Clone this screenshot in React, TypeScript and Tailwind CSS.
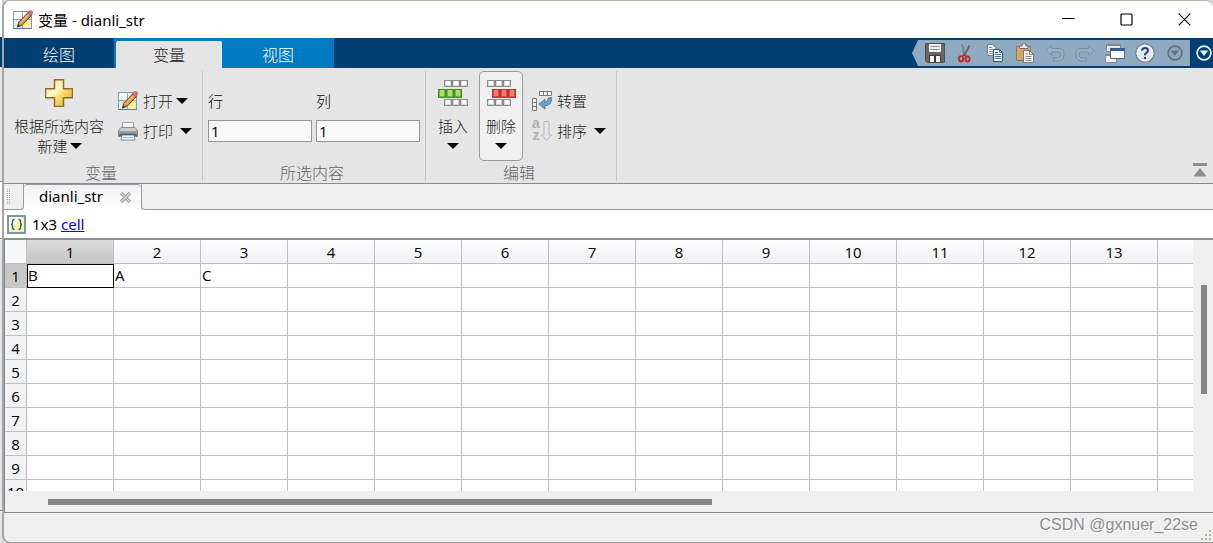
import React from 'react';

const columns = ['1', '2', '3', '4', '5', '6', '7', '8', '9', '10', '11', '12', '13', ''];
const rows = [1, 2, 3, 4, 5, 6, 7, 8, 9, 10];
const values = ['B', 'A', 'C'];

function Caret() {
  return (
    <svg width="12" height="6" viewBox="0 0 12 6" className="shrink-0">
      <path d="M0 0h12L6 6z" fill="#000" />
    </svg>
  );
}

function EditIcon() {
  return (
    <svg width="20" height="20" viewBox="0 0 20 20" className="shrink-0">
      <rect x="0.5" y="1.5" width="18" height="17" fill="#fff" stroke="#7d9cb5" />
      <rect x="10" y="10" width="8" height="8" fill="#f7ee9c" />
      <rect x="10" y="10" width="4" height="3" fill="#fbf7cf" />
      <rect x="1" y="10" width="8" height="8" fill="#dfe9f0" />
      <path d="M9.500 2v16M1 9.500h17" stroke="#8fb0c8" />
      <path d="M0 18.500h19" stroke="#587b97" />
      <path d="M4.500 17l1.200-4.800L14.800 2.800l3.400 2.900-9.200 9.600z" fill="#d2924a" stroke="#6f4420" strokeWidth="1" />
      <path d="M7.400 13.400L15.800 4.400" stroke="#f0c283" strokeWidth="1.300" />
      <path d="M14.600 3l2-2.200q1-.8 2.300.3t.4 2.400L17.900 5.700z" fill="#d4757b" stroke="#a04a55" strokeWidth="0.700" />
      <path d="M4.500 17l.6-2.400 1.900 1.500z" fill="#2b2118" />
    </svg>
  );
}

function PlusIcon() {
  return (
    <svg width="28" height="28" viewBox="0 0 28 28">
      <defs>
        <linearGradient id="gold" x1="0" y1="0" x2="1" y2="1">
          <stop offset="0.1" stopColor="#f8dc80" />
          <stop offset="0.4" stopColor="#fffad0" />
          <stop offset="0.6" stopColor="#f6d860" />
          <stop offset="1" stopColor="#e2a418" />
        </linearGradient>
      </defs>
      <path d="M9.500 .8h9v9h9v9h-9v8.600h-9v-8.600h-9v-9h9z" fill="url(#gold)" stroke="#8e6d28" strokeWidth="1.500" />
    </svg>
  );
}

function PrintIcon() {
  return (
    <svg width="20" height="20" viewBox="0 0 20 20" className="shrink-0">
      <defs>
        <linearGradient id="printer" x1="0" y1="0" x2="0" y2="1">
          <stop offset="0" stopColor="#d4d7d9" />
          <stop offset="0.5" stopColor="#9a9ea1" />
          <stop offset="1" stopColor="#5c6064" />
        </linearGradient>
      </defs>
      <path d="M4.500 8V1.500h11V8" fill="#f5f9fc" stroke="#8fa5b7" />
      <path d="M3 6.500h14l2.500 3v6H.5v-6z" fill="url(#printer)" stroke="#73787c" strokeWidth="0.800" />
      <path d="M2 9h16" stroke="#e3e6e8" />
      <path d="M3 13.500h14" stroke="#3d4043" />
      <path d="M4 14h12l1 5H3z" fill="#e7f1f9" stroke="#6b8aa4" strokeWidth="0.900" />
      <path d="M5 16.500h10" stroke="#a9c2d6" />
    </svg>
  );
}

function Cells({ x, y, fill, stroke, shade, h = 6 }: { x: number; y: number; fill: string; stroke: string; shade: string; h?: number }) {
  return (
    <g>
      {[0, 8, 16].map((dx) => (
        <g key={dx}>
          <rect x={x + dx} y={y} width="8" height={h + 1} fill={stroke} />
          <rect x={x + dx + 1} y={y + 1} width="6" height={h - 1} fill={shade} />
          <rect x={x + dx + 2} y={y + 1} width="4" height={h - 2} fill={fill} />
        </g>
      ))}
    </g>
  );
}

function InsertIcon() {
  return (
    <svg width="30" height="28" viewBox="0 0 30 28">
      <Cells x={6} y={0} fill="#fff" shade="#d8d8d8" stroke="#8b8b8b" />
      <Cells x={0} y={9} fill="#a8dc70" shade="#6fb53c" stroke="#4b8a28" h={8} />
      <Cells x={6} y={19} fill="#fff" shade="#d8d8d8" stroke="#8b8b8b" />
    </svg>
  );
}

function DeleteIcon() {
  return (
    <svg width="30" height="28" viewBox="0 0 30 28">
      <Cells x={1} y={0} fill="#fff" shade="#d8d8d8" stroke="#8b8b8b" />
      <Cells x={6} y={9} fill="#f27a70" shade="#dc4a46" stroke="#b83434" h={8} />
      <Cells x={1} y={19} fill="#fff" shade="#d8d8d8" stroke="#8b8b8b" />
    </svg>
  );
}

function TransposeIcon() {
  return (
    <svg width="20" height="20" viewBox="0 0 20 20" className="shrink-0">
      <g fill="#fafafa" stroke="#777">
        <path d="M7.500.5h12v4h-12zM11.500.5v4M15.500.5v4" />
        <path d="M.5 7.500h4v12h-4zM.5 11.500h4M.5 15.500h4" />
      </g>
      <path d="M19.500 6.500q.6 8-6.500 8.300v3.400L6.800 13l6.200-4.700v3q3.200-.2 3.300-4.300z" fill="#6fa3cb" stroke="#3f7099" strokeWidth="0.800" />
    </svg>
  );
}

function SortIcon() {
  return (
    <span className="flex h-5 w-5 shrink-0">
      <span className="-mt-1 flex w-2 flex-col font-['Liberation_Sans'] text-sm leading-3 font-bold text-[#b0b0b0]">
        <span>a</span>
        <span>z</span>
      </span>
      <svg width="11" height="20" viewBox="0 0 11 20" className="ml-px">
        <path d="M3 .5h5V14h2.500l-5 5.500-5-5.500H3z" fill="#e4e4e4" stroke="#b7b7b7" />
      </svg>
    </span>
  );
}

function CircleArrow({ color }: { color: string }) {
  return (
    <svg width="16" height="16" viewBox="0 0 16 16" className="shrink-0">
      <circle cx="8" cy="8" r="6.900" fill="none" stroke={color} strokeWidth="1.700" />
      <path d="M3.800 5.500h8.400L8 11z" fill={color} />
    </svg>
  );
}

const quickIcons: { label: string; icon: React.ReactNode }[] = [
  {
    label: '保存',
    icon: (
      <svg width="20" height="20" viewBox="0 0 20 20">
        <path d="M.5.5h19v19H2L.5 18z" fill="#666" stroke="#505050" />
        <path d="M4 1h12v8H4z" fill="#f0f0f0" />
        <path d="M5.500 3.500h9M5.500 6.500h9" stroke="#8c8c8c" />
        <path d="M4 12h12v7.500H4z" fill="#3c3c3c" />
        <path d="M5 13h4v6H5zM11 13h4v6h-4z" fill="#efefef" />
      </svg>
    ),
  },
  {
    label: '剪切',
    icon: (
      <svg width="20" height="20" viewBox="0 0 20 20" fill="none">
        <path d="M7 1l2.500 11.500" stroke="#7a8288" strokeWidth="1.800" />
        <path d="M14.500 2.500L9 13" stroke="#62686e" strokeWidth="1.800" />
        <ellipse cx="6" cy="15.800" rx="2.100" ry="2.700" stroke="#c0262e" strokeWidth="1.800" />
        <ellipse cx="12.500" cy="16" rx="2.100" ry="2.700" stroke="#c0262e" strokeWidth="1.800" />
        <path d="M7.200 13l1.800-1.300 2.700 1.800" stroke="#c0262e" strokeWidth="1.500" />
      </svg>
    ),
  },
  {
    label: '复制',
    icon: (
      <svg width="20" height="20" viewBox="0 0 20 20">
        <path d="M2.500 1.500h5l3 3v8h-8z" fill="#f4f8fb" stroke="#6a7f92" />
        <path d="M4 4.500h3M4 6.500h5M4 8.500h5M4 10.500h4" stroke="#7d8f9f" />
        <path d="M8.500 6.500h6l3 3v9h-9z" fill="#f4f8fb" stroke="#2c5482" />
        <path d="M14.500 6.500v3h3M10 9.500h3M10 11.500h6M10 13.500h6M10 15.500h6" fill="none" stroke="#446d99" />
      </svg>
    ),
  },
  {
    label: '粘贴',
    icon: (
      <svg width="20" height="20" viewBox="0 0 20 20">
        <path d="M1.500 3.500h14v14h-14z" fill="#d2a868" stroke="#9a7440" />
        <path d="M4.500 5.500V3h2.500q0-2.500 2-2.500T11 3h2v2.500z" fill="#eee" stroke="#737373" />
        <path d="M8.500 7.500h6l4 4v8h-10z" fill="#f7f7f7" stroke="#777" />
        <path d="M14.500 7.500v4h4M10.500 11h2.500M10.500 13.500h6M10.500 15.500h6M10.500 17.500h6" fill="none" stroke="#888" />
      </svg>
    ),
  },
  {
    label: '撤消',
    icon: (
      <svg width="20" height="20" viewBox="0 0 20 20">
        <path d="M.8 7.500L6.500 2.500v3H14q5 .5 5 6t-5 6.500H8.500v-3h5q2.500-.5 2.500-3.500t-2.500-2.500h-7V12z" fill="#9bb2c6" stroke="#758fa5" />
      </svg>
    ),
  },
  {
    label: '重做',
    icon: (
      <svg width="20" height="20" viewBox="0 0 20 20">
        <path d="M19.200 7.500L13.500 2.500v3H6q-5 .5-5 6T6 18h5.500v-3h-5Q4 14.500 4 11.500T6.500 9h7v3z" fill="#9bb2c6" stroke="#758fa5" />
      </svg>
    ),
  },
  {
    label: '切换窗口',
    icon: (
      <svg width="20" height="20" viewBox="0 0 20 20">
        <path d="M1.500 1.500h14v7h-14z" fill="#e6e6e6" stroke="#85898c" />
        <path d="M1 2h15" stroke="#85898c" strokeWidth="2" />
        <path d="M.5 11.500h11v8H.5z" fill="#eee" stroke="#85898c" />
        <path d="M0 12h12" stroke="#85898c" strokeWidth="2" />
        <path d="M5.500 5.500h14v10h-14z" fill="#f5f8fa" stroke="#4a6c90" />
        <path d="M5 6.500h15" stroke="#355f8a" strokeWidth="3" />
      </svg>
    ),
  },
  {
    label: '帮助',
    icon: (
      <svg width="20" height="20" viewBox="0 0 20 20">
        <circle cx="10" cy="10" r="9.200" fill="#e9f1f7" stroke="#6b8299" strokeWidth="1.300" />
        <circle cx="10" cy="10" r="7.800" fill="#dfeaf3" stroke="#fff" />
        <path d="M7 7.600q.2-2.600 3-2.600t3 2.500q0 1.500-1.600 2.400T10 12.300" fill="none" stroke="#2c4460" strokeWidth="2" />
        <circle cx="10" cy="15" r="1.200" fill="#2c4460" />
      </svg>
    ),
  },
  { label: '更多', icon: <CircleArrow color="#62727f" /> },
];

function RibbonSection({ title, className, children }: { title: string; className: string; children: React.ReactNode }) {
  return (
    <section className={`mt-[3px] mb-0.5 flex shrink-0 flex-col border-r border-[#c6c6c6] ${className}`}>
      <div className="flex flex-1 items-start">{children}</div>
      <h2 className="-ml-1 text-center text-base leading-4 text-[#666]">{title}</h2>
    </section>
  );
}

function SmallButton({ icon, label, gap = '', arrow = true }: { icon: React.ReactNode; label: string; gap?: string; arrow?: boolean }) {
  return (
    <button className="flex h-[30px] items-center">
      {icon}
      <span className="ml-[5px]">{label}</span>
      {arrow && <span className={gap}><Caret /></span>}
    </button>
  );
}

export default function App() {
  return (
    <div className="flex h-screen overflow-hidden bg-[#d6d6d6] font-['Open_Sans','Noto_Sans_CJK_SC',sans-serif] text-[15px] leading-5 text-black">
      <div className="flex w-[2px] shrink-0 flex-col bg-[#e5e5e5]">
        <div className="h-[37px] bg-white" />
        <div className="h-[30px] bg-[#003f72]" />
        <div className="h-[115px] border-b border-[#8b8b8b]" />
        <div className="h-[57px] border-b border-[#8b8b8b] bg-white" />
        <div className="h-[272px] border-b border-[#8b8b8b]" />
      </div>
      <div className="flex min-w-0 flex-1 flex-col overflow-hidden rounded-l-lg rounded-tr-lg border-t border-b border-l-2 border-t-[#b3b5a4] border-b-[#999] border-l-[#a3a5a8] bg-[#efefef]">
        <header className="flex h-[37px] shrink-0 items-center bg-white pl-[9px]">
          <EditIcon />
          <h1 className="ml-[5px] flex-1 font-['Noto_Sans','Noto_Sans_CJK_SC',sans-serif] text-[15px]">变量 - dianli_str</h1>
          <button aria-label="最小化" className="flex w-[58px] justify-center">
            <svg width="13" height="13" viewBox="0 0 13 13"><path d="M0 5.500h12.500" stroke="#000" /></svg>
          </button>
          <button aria-label="最大化" className="flex w-[58px] justify-center">
            <svg width="13" height="13" viewBox="0 0 13 13"><rect x="1" y="1" width="11" height="11" rx="1" fill="none" stroke="#000" strokeWidth="1.200" /></svg>
          </button>
          <button aria-label="关闭" className="flex w-[58px] justify-center">
            <svg width="13" height="13" viewBox="0 0 13 13"><path d="M.7.7l11.600 11.600M12.300.7L.7 12.300" stroke="#000" strokeWidth="1.200" /></svg>
          </button>
        </header>

        <nav className="flex h-[30px] shrink-0 bg-[#003f72] text-base font-light text-white">
          <button className="w-[110px] pt-1">绘图</button>
          <div className="flex bg-[#007bc3] pl-[2px]">
            <button className="mt-[3px] w-[106px] rounded-t-xs bg-[#e5e5e5] text-[#222]">变量</button>
            <button className="w-[112px] pt-1">视图</button>
          </div>
          <div className="flex-1" />
          <div className="my-[2px] flex items-center bg-[#8fa9c0] pl-2 [clip-path:polygon(6px_0,100%_0,100%_100%,6px_100%,0_50%)]">
            {quickIcons.map((item) => (
              <button key={item.label} aria-label={item.label} className="flex w-[30px] items-center justify-center">
                {item.icon}
              </button>
            ))}
          </div>
          <button aria-label="显示选项" className="flex w-[23px] items-center justify-center pl-1"><CircleArrow color="#e8f0f6" /></button>
        </nav>

        <div className="flex h-[116px] shrink-0 border-b border-[#8b8b8b] bg-[#e5e5e5] font-light text-[#222]">
          <RibbonSection title="变量" className="w-[199px]">
            <button className="ml-[10px] flex w-[90px] shrink-0 flex-col items-center pt-2">
              <PlusIcon />
              <span className="mt-[9px] whitespace-nowrap">根据所选内容</span>
              <span className="flex items-center gap-[2px] pl-px">新建<Caret /></span>
            </button>
            <div className="mt-[15px] ml-[14px] flex flex-col items-start">
              <SmallButton icon={<EditIcon />} label="打开" gap="ml-[3px]" />
              <SmallButton icon={<PrintIcon />} label="打印" gap="ml-[7px]" />
            </div>
          </RibbonSection>
          <RibbonSection title="所选内容" className="w-[223px]">
            <div className="mt-5 ml-[5px] flex gap-1 text-black">
              <label className="flex w-[104px] flex-col gap-[9px]">
                行
                <input defaultValue="1" className="h-[22px] w-full border border-[#959595] bg-[#f8f8f8] px-[2px] font-normal" />
              </label>
              <label className="flex w-[104px] flex-col gap-[9px]">
                列
                <input defaultValue="1" className="h-[22px] w-full border border-[#959595] bg-[#f8f8f8] px-[2px] font-normal" />
              </label>
            </div>
          </RibbonSection>
          <RibbonSection title="编辑" className="w-[191px]">
            <button className="ml-[5px] flex h-[90px] w-11 flex-col items-center pt-[9px]">
              <InsertIcon />
              <span className="mt-2 mb-[7px]">插入</span>
              <Caret />
            </button>
            <button className="ml-1 flex h-[90px] w-11 flex-col items-center rounded-[5px] border border-[#999] bg-[#f0f0f0] pt-2">
              <DeleteIcon />
              <span className="mt-2 mb-[7px]">删除</span>
              <Caret />
            </button>
            <div className="mt-[15px] ml-[9px] flex flex-col items-start">
              <SmallButton icon={<TransposeIcon />} label="转置" arrow={false} />
              <SmallButton icon={<SortIcon />} label="排序" gap="ml-[7px]" />
            </div>
          </RibbonSection>
          <div className="flex-1" />
          <button aria-label="折叠工具条" className="mr-1.5 mb-1.5 self-end">
            <svg width="14" height="14" viewBox="0 0 14 14"><path d="M0 0h14v3H0zM7 5l6.500 8.500H.5z" fill="#8e8e8e" /></svg>
          </button>
        </div>

        <div className="flex h-[26px] shrink-0 items-stretch">
          <div className="flex w-4 justify-center border-b border-[#999] pt-[5px] pr-1.5">
            <svg width="4" height="16" viewBox="0 0 4 16"><path d="M.5 0v16M2.500 0v16" stroke="#aaa" strokeDasharray="1 1" /></svg>
          </div>
          <div className="w-1 rounded-br border-r border-b border-[#999]" />
          <div className="flex w-[117px] items-center rounded-t border-t border-[#999] bg-linear-to-b from-[#f1f1f5] to-white pl-[15px] font-['Noto_Sans'] leading-5">
            <span className="pb-1">dianli_str</span>
            <button aria-label="关闭选项卡" className="ml-4">
              <svg width="13" height="13" viewBox="0 0 13 13"><path d="M2 2l9 9M11 2l-9 9" stroke="#a2a2a2" strokeWidth="3.400" /><path d="M2 2l9 9M11 2l-9 9" stroke="#d2d2d2" strokeWidth="1.200" /></svg>
            </button>
          </div>
          <div className="flex-1 rounded-bl border-b border-l border-[#999]" />
        </div>

        <div className="flex h-[28px] shrink-0 items-center bg-white pl-[3px]">
          <svg width="19" height="19" viewBox="0 0 19 19">
            <rect x="1" y="1" width="17" height="17" fill="#f8f2b0" stroke="#6b8fae" strokeWidth="1.800" />
            <path d="M2 2h13L2 15z" fill="#fdfbe4" />
            <path d="M7.500 4.500Q5.500 4.500 5.500 6.500V8q0 1.500-1.500 1.500Q5.500 9.500 5.500 11v1.500q0 2 2 2M11.500 4.500q2 0 2 2V8q0 1.500 1.500 1.500-1.500 0-1.500 1.500v1.500q0 2-2 2" fill="none" stroke="#365e74" strokeWidth="1.400" />
          </svg>
          <span className="ml-[6px] font-['Noto_Sans']">1x3 <a href="#cell" className="text-[#0000ee] underline">cell</a></span>
        </div>

        <main className="flex min-h-0 flex-1 flex-col border-t-2 border-b border-l border-t-[#8f8f96] border-b-[#85858c] border-l-[#85858c]">
          <div className="flex min-h-0 flex-1">
            <div className="min-w-0 flex-1 overflow-hidden bg-white">
              <table className="w-[1240px] table-fixed border-separate border-spacing-0">
                <thead>
                  <tr className="h-6">
                    <th className="w-[22px] border-r border-b border-[#bfbfbf] bg-[#f6f7f8]" />
                    {columns.map((name, i) => (
                      <th
                        key={i}
                        className={`w-[87px] border-r border-b border-[#bfbfbf] p-0 font-normal ${i === 0 ? 'bg-linear-to-b from-[#dcdcdc] to-[#c6c6c6]' : 'bg-linear-to-b from-[#fdfdfe] to-[#f0f1f4]'}`}
                      >
                        {name}
                      </th>
                    ))}
                  </tr>
                </thead>
                <tbody>
                  {rows.map((row) => (
                    <tr key={row} className="h-6">
                      <th className={`border-r border-b border-[#bfbfbf] p-0 font-normal ${row === 1 ? 'bg-[#c8c8c8]' : 'bg-[#f1f2f4]'}`}>{row}</th>
                      {columns.map((_, i) => (
                        <td
                          key={i}
                          className={`border-r border-b border-[#bfbfbf] pt-0 pr-0 pb-0.5 pl-px ${row === 1 && i === 0 ? 'outline -outline-offset-1 outline-black' : ''}`}
                        >
                          {row === 1 ? values[i] : ''}
                        </td>
                      ))}
                    </tr>
                  ))}
                </tbody>
              </table>
            </div>
            <div className="flex w-5 shrink-0 justify-end pr-1.5">
              <div className="mt-[45px] h-[109px] w-1.5 bg-[#858585]" />
            </div>
          </div>
          <div className="h-[21px] shrink-0 pt-2">
            <div className="ml-[43px] h-1.5 w-[55%] bg-[#858585]" />
          </div>
        </main>

        <footer className="flex h-[29px] shrink-0 items-start justify-end">
          <span className="font-['Liberation_Sans'] text-base text-[#8c8c8c] [text-shadow:1px_1px_0_#fff]">CSDN @gxnuer_22se</span>
          <svg width="12" height="12" viewBox="0 0 12 12" className="ml-[3px] self-end">
            <path d="M8 0h2v2H8zM4 4h2v2H4zM8 4h2v2H8zM0 8h2v2H0zM4 8h2v2H4zM8 8h2v2H8z" fill="#b4b4a4" />
          </svg>
        </footer>
      </div>
    </div>
  );
}
